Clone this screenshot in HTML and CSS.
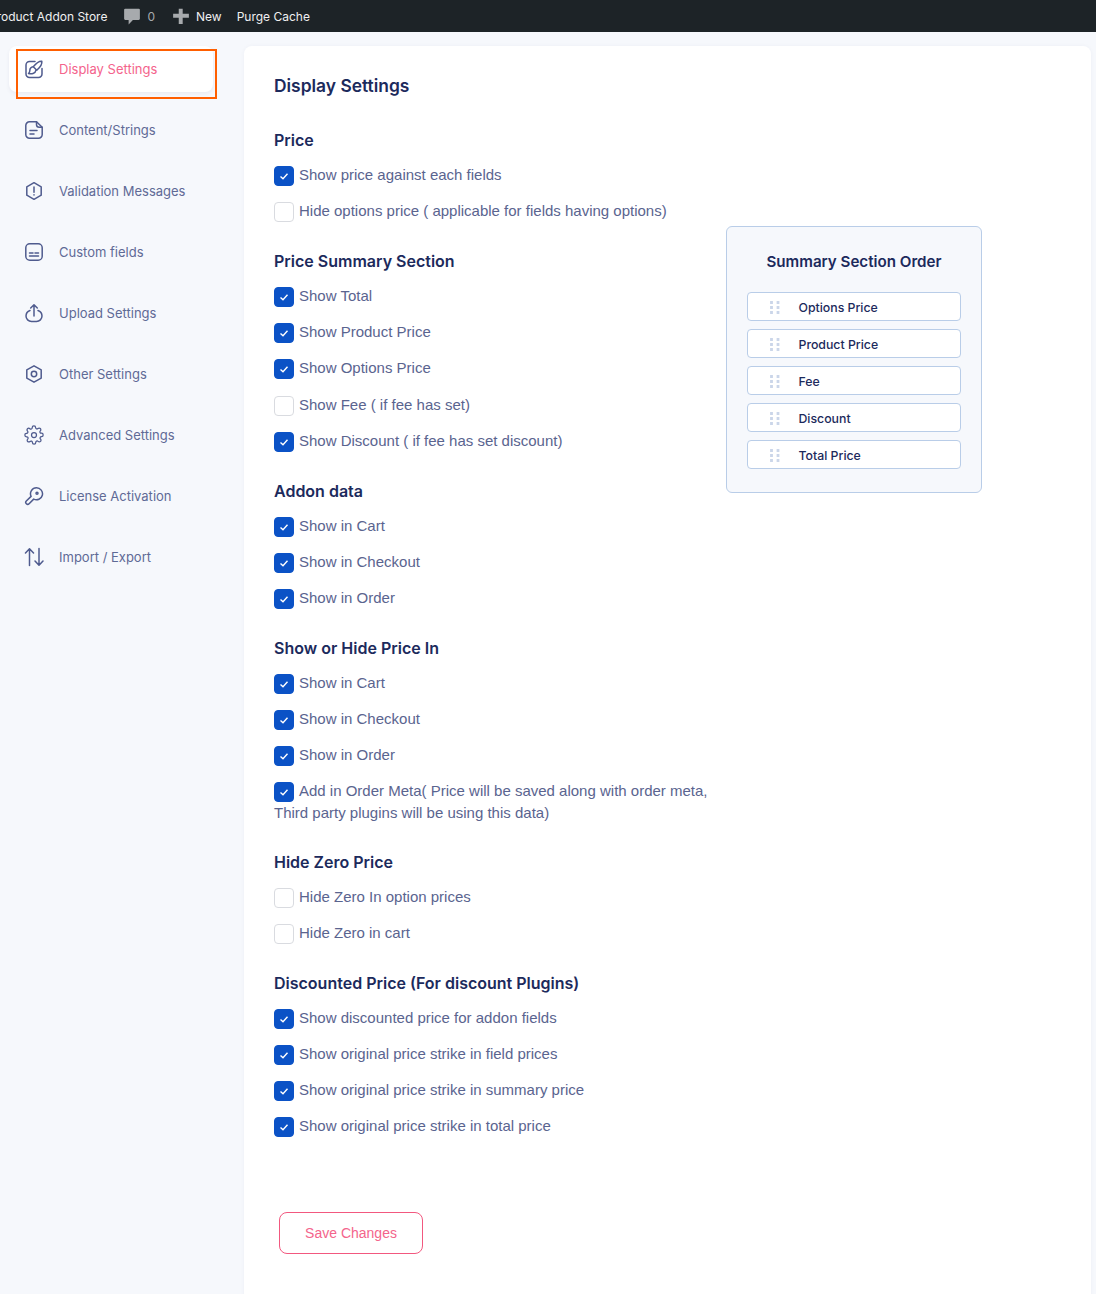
FILE: index.html
```html
<!DOCTYPE html>
<html lang="en">
<head>
<meta charset="utf-8">
<title>Display Settings</title>
<link rel="stylesheet" href="styles.css">
</head>
<body>
<header class="adminbar">
  <span class="bar-item bar-store">Product Addon Store</span>
  <span class="bar-item bar-comments">
    <svg class="bar-icon" viewBox="0 0 16 16"><path d="M2 1.500h12a1 1 0 0 1 1 1v8a1 1 0 0 1-1 1H8.800L5 15.500v-4H2a1 1 0 0 1-1-1v-8a1 1 0 0 1 1-1z" fill="#a7aaad"/></svg>
    <span class="bar-count">0</span>
  </span>
  <span class="bar-item bar-new">
    <svg class="bar-icon" viewBox="0 0 16 16"><path d="M6 1.500h3.500V6H15v3.500H9.500V15H6V9.500H1V6h5z" fill="#a7aaad"/></svg>
    New
  </span>
  <span class="bar-item">Purge Cache</span>
</header>
<div class="layout">
  <nav class="sidebar">
    <a class="nav-item active">
      <svg class="nav-icon" viewBox="0 0 20 20"><path d="M11 2.500H5.500a3.500 3.500 0 0 0-3.500 3.500v9a3.500 3.500 0 0 0 3.500 3.500h9a3.500 3.500 0 0 0 3.500-3.500V9.500"/><path d="M17.800 2.200c.6 3.200-2.400 6.800-5 9l-3.500-3.500C11.500 5 14.800 1.800 17.800 2.200z"/><path d="M9.300 7.700c-2.200.2-3.500 1.900-3.500 4 0 1-.5 2-1.300 2.800 2.600.7 6.900.4 7.500-3.300"/></svg>
      <span>Display Settings</span>
    </a>
    <a class="nav-item">
      <svg class="nav-icon" viewBox="0 0 20 20"><path d="M5.500 1.800h7l5.700 5.500v7.200a3.700 3.700 0 0 1-3.700 3.700h-9a3.700 3.700 0 0 1-3.700-3.700v-9a3.700 3.700 0 0 1 3.700-3.700z"/><path d="M12.500 1.800v2.700a2.800 2.800 0 0 0 2.800 2.800h2.900"/><path d="M6 10.500h7M6 14h4"/></svg>
      <span>Content/Strings</span>
    </a>
    <a class="nav-item">
      <svg class="nav-icon" viewBox="0 0 20 20"><path d="M10 1.700l7.200 4.100v8.400L10 18.300l-7.200-4.100V5.800z"/><path d="M10 6v5.300M10 13.700v.4"/></svg>
      <span>Validation Messages</span>
    </a>
    <a class="nav-item">
      <svg class="nav-icon" viewBox="0 0 20 20"><rect x="1.800" y="1.800" width="16.400" height="16.400" rx="4"/><path d="M5.500 11h3.500M11 11h3.500M5.500 14h9"/></svg>
      <span>Custom fields</span>
    </a>
    <a class="nav-item">
      <svg class="nav-icon" viewBox="0 0 20 20"><path d="M6 7.500A6 6 0 0 0 2 13a5.500 5.500 0 0 0 5.500 5.500h5A5.500 5.500 0 0 0 18 13a6 6 0 0 0-4-5.500"/><path d="M10 13V2M6.700 5L10 1.700 13.300 5"/></svg>
      <span>Upload Settings</span>
    </a>
    <a class="nav-item">
      <svg class="nav-icon" viewBox="0 0 20 20"><path d="M10 1.800l7.200 4.100v8.200L10 18.200l-7.200-4.100V5.900z"/><circle cx="10" cy="10" r="2.700"/></svg>
      <span>Other Settings</span>
    </a>
    <a class="nav-item">
      <svg class="nav-icon" viewBox="0 0 24 24"><circle cx="12" cy="12" r="3"/><path d="M19.400 15a1.650 1.650 0 0 0 .33 1.820l.06.06a2 2 0 1 1-2.830 2.830l-.06-.06a1.650 1.650 0 0 0-2.800 1.170V21a2 2 0 1 1-4 0v-.09a1.650 1.650 0 0 0-2.800-1.170l-.06.06a2 2 0 1 1-2.830-2.830l.06-.06a1.650 1.650 0 0 0-1.170-2.800H3a2 2 0 1 1 0-4h.09a1.650 1.650 0 0 0 1.170-2.800l-.06-.06a2 2 0 1 1 2.830-2.830l.06.06a1.650 1.650 0 0 0 2.800-1.170V3a2 2 0 1 1 4 0v.09a1.650 1.650 0 0 0 2.800 1.170l.06-.06a2 2 0 1 1 2.830 2.830l-.06.06a1.650 1.650 0 0 0 1.170 2.800H21a2 2 0 1 1 0 4h-.09a1.650 1.650 0 0 0-1.510 1z"/></svg>
      <span>Advanced Settings</span>
    </a>
    <a class="nav-item">
      <svg class="nav-icon" viewBox="0 0 20 20"><path d="M12.500 1.800a6 6 0 1 1-2.800 11.300l-4.600 4.600a1.900 1.900 0 0 1-2.800-2.700l4.800-4.600a6 6 0 0 1 5.400-8.600z"/><circle cx="13" cy="7.300" r="1"/></svg>
      <span>License Activation</span>
    </a>
    <a class="nav-item">
      <svg class="nav-icon" viewBox="0 0 20 20"><path d="M5.500 18.500V2M1.500 6l4-4.200L9.500 6M15 1.500V18M11 14l4 4.200 4-4.200"/></svg>
      <span>Import / Export</span>
    </a>
  </nav>
  <main class="card">
    <h1 class="title">Display Settings</h1>
    <div class="columns">
      <div class="options">
        <section class="group">
          <h2 class="group-title">Price</h2>
          <label class="option"><span class="box on"></span>Show price against each fields</label>
          <label class="option"><span class="box"></span>Hide options price ( applicable for fields having options)</label>
        </section>
        <section class="group">
          <h2 class="group-title">Price Summary Section</h2>
          <label class="option"><span class="box on"></span>Show Total</label>
          <label class="option"><span class="box on"></span>Show Product Price</label>
          <label class="option"><span class="box on"></span>Show Options Price</label>
          <label class="option"><span class="box"></span>Show Fee ( if fee has set)</label>
          <label class="option"><span class="box on"></span>Show Discount ( if fee has set discount)</label>
        </section>
        <section class="group">
          <h2 class="group-title">Addon data</h2>
          <label class="option"><span class="box on"></span>Show in Cart</label>
          <label class="option"><span class="box on"></span>Show in Checkout</label>
          <label class="option"><span class="box on"></span>Show in Order</label>
        </section>
        <section class="group group-tight">
          <h2 class="group-title">Show or Hide Price In</h2>
          <label class="option"><span class="box on"></span>Show in Cart</label>
          <label class="option"><span class="box on"></span>Show in Checkout</label>
          <label class="option"><span class="box on"></span>Show in Order</label>
          <label class="option"><span class="box on"></span>Add in Order Meta( Price will be saved along with order meta, Third party plugins will be using this data)</label>
        </section>
        <section class="group">
          <h2 class="group-title">Hide Zero Price</h2>
          <label class="option"><span class="box"></span>Hide Zero In option prices</label>
          <label class="option"><span class="box"></span>Hide Zero in cart</label>
        </section>
        <section class="group">
          <h2 class="group-title">Discounted Price (For discount Plugins)</h2>
          <label class="option"><span class="box on"></span>Show discounted price for addon fields</label>
          <label class="option"><span class="box on"></span>Show original price strike in field prices</label>
          <label class="option"><span class="box on"></span>Show original price strike in summary price</label>
          <label class="option"><span class="box on"></span>Show original price strike in total price</label>
        </section>
        <button class="save" type="button">Save Changes</button>
      </div>
      <aside class="order">
        <h3 class="order-title">Summary Section Order</h3>
        <div class="order-list">
          <div class="order-row"><span class="grip"></span>Options Price</div>
          <div class="order-row"><span class="grip"></span>Product Price</div>
          <div class="order-row"><span class="grip"></span>Fee</div>
          <div class="order-row"><span class="grip"></span>Discount</div>
          <div class="order-row"><span class="grip"></span>Total Price</div>
        </div>
      </aside>
    </div>
  </main>
</div>
<div class="highlight"></div>
</body>
</html>
```
FILE: styles.css
```css
* { box-sizing: border-box; }
html, body { margin: 0; height: 1294px; overflow: hidden; }
body { background: #f6f8fc; font-family: Inter, "Liberation Sans", sans-serif; position: relative; }

.adminbar { height: 32px; background: #1d2327; color: #f0f0f1; display: flex; align-items: center; gap: 15px; font-size: 12px; margin-left: -11px; white-space: nowrap; }
.bar-item { display: flex; align-items: center; }
.bar-icon { width: 18px; height: 18px; margin-right: 6px; }
.bar-comments { margin-left: 1px; }
.bar-count { color: #a7aaad; }
.bar-new { margin-left: 2px; }

.layout { display: flex; align-items: flex-start; padding-top: 14px; padding-left: 9px; }
.sidebar { width: 204px; display: flex; flex-direction: column; gap: 15px; margin-right: 31px; }
.nav-item { height: 46px; display: flex; align-items: center; gap: 15px; padding-left: 15px; font-size: 13px; color: #5f6a96; border-radius: 8px; }
.nav-item.active { background: #fff; color: #f4648c; box-shadow: 0 2px 4px rgba(30, 40, 90, 0.06); }
.nav-icon { width: 20px; height: 20px; fill: none; stroke: #4f5b8e; stroke-width: 1.500; stroke-linecap: round; stroke-linejoin: round; flex: none; }

.card { width: 847px; height: 1300px; background: #fff; border-radius: 8px; padding: 30px 30px 0; box-shadow: 0 0 4px rgba(30, 40, 90, 0.04); }
.title { margin: 0 0 33px; font-size: 17.400px; line-height: 20px; font-weight: 600; color: #1c2a5c; }
.columns { display: flex; align-items: flex-start; }
.options { width: 452px; flex: none; }
.group { margin-bottom: 27.800px; }
.group-tight { margin-bottom: 26.400px; }
.group-title { margin: 0 0 13px; font-size: 16px; line-height: 22px; font-weight: 600; color: #1c2a5c; }
.option { display: block; font-family: "Liberation Sans", Arial, sans-serif; font-size: 15px; line-height: 22px; color: #5a648f; margin-bottom: 14.200px; padding-right: 8px; }
.box { display: inline-block; width: 20px; height: 20px; margin: 0 5px -1px 0; vertical-align: -5px; border: 1px solid #d9dbe0; border-radius: 4px; background: #fff center / 12px 12px no-repeat; }
.box.on { background-color: #0b52c6; border-color: #0b52c6; background-image: url("data:image/svg+xml,%3Csvg xmlns='http://www.w3.org/2000/svg' viewBox='0 0 12 12'%3E%3Cpath d='M2.500 6.500l2.500 2.300 4.500-5' fill='none' stroke='%23fff' stroke-width='1.400'/%3E%3C/svg%3E"); }
.save { display: block; margin: 75px 0 0 5px; width: 144px; height: 42px; background: #fff; border: 1px solid #f2587f; border-radius: 8px; color: #f4648c; font-family: "Liberation Sans", Arial, sans-serif; font-size: 14px; }

.order { width: 256px; margin: 97px 0 0; padding: 25px 20px 23px; background: #f6f8fc; border: 1px solid #b9cde8; border-radius: 6px; flex: none; }
.order-title { margin: 0 0 20px; text-align: center; font-size: 15.150px; line-height: 20px; font-weight: 600; color: #1c2a5c; }
.order-list { display: flex; flex-direction: column; gap: 8px; }
.order-row { height: 29px; display: flex; align-items: center; background: #fff; border: 1px solid #b9cde8; border-radius: 4px; padding: 1px 0 0 22px; font-size: 12.300px; font-weight: 500; color: #1c2a5c; }
.grip { width: 9.500px; height: 13px; margin-right: 19px; background: radial-gradient(circle, #cbd6e9 1.400px, transparent 1.700px) -1.750px -1px / 6.500px 5px; flex: none; }

.highlight { position: absolute; left: 16px; top: 49px; width: 201px; height: 50px; border: 2px solid #ff5f00; }
```
